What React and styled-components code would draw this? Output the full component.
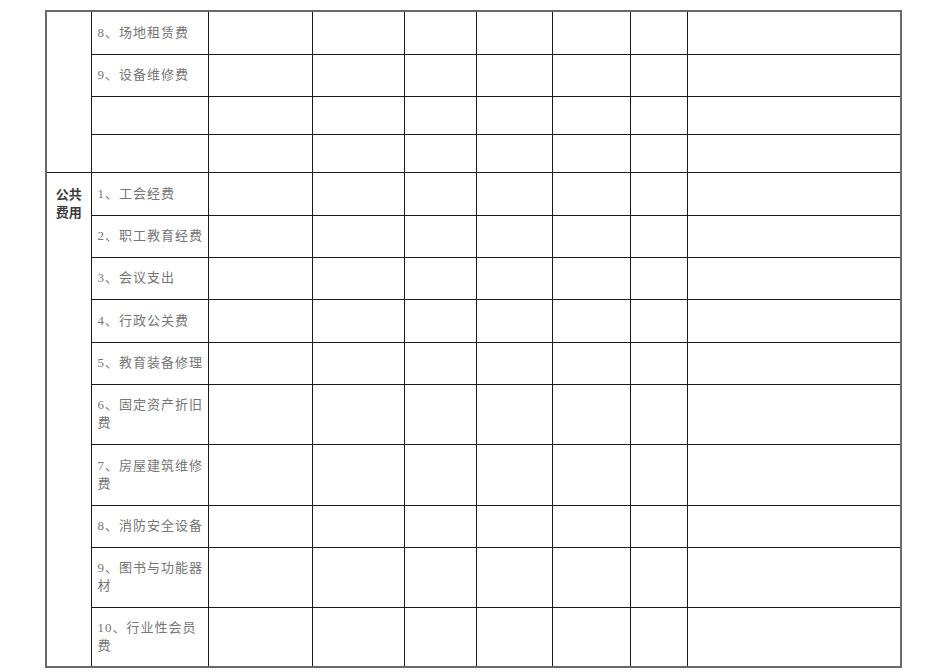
import React from 'react'
import styled, { createGlobalStyle } from 'styled-components'

const GlobalStyle = createGlobalStyle`
    html, body {
        margin: 0;
        padding: 0;
        background: #fff;
    }
    body {
        font-family: "Liberation Serif", "Noto Sans CJK SC", serif;
    }
`

const Page = styled.div`
    padding: 10px 0 0 45px;
    width: 950px;
    height: 672px;
    box-sizing: border-box;
    overflow: hidden;
`

const Sheet = styled.table`
    border-collapse: collapse;
    table-layout: fixed;
    width: 855px;
    border: 2px solid #6a6a6a;
`

const Cell = styled.td`
    border: 1px solid #1a1a1a;
    height: ${p => p.h}px;
    padding: 0;
    box-sizing: border-box;
`

const GroupCell = styled.td`
    border: 1px solid #1a1a1a;
    vertical-align: top;
    text-align: center;
    padding: 12px 0 0 0;
    font-family: "Noto Sans CJK SC", "Noto Sans", sans-serif;
    font-weight: 700;
    font-size: 13px;
    line-height: 18px;
    color: #3a3a3a;
`

const ItemCell = styled(Cell)`
    padding: 0 4px 0 6px;
    vertical-align: middle;
    font-family: "Liberation Serif", "Noto Sans CJK SC", serif;
    font-size: 13px;
    line-height: 18px;
    letter-spacing: 1px;
    color: #767676;
`

const Line = styled.div`
    white-space: nowrap;
`

const widths = [45, 117, 104, 92, 72, 76, 78, 57, 214]

const rows = [
    { h: 43, label: ['8、场地租赁费'] },
    { h: 42, label: ['9、设备维修费'] },
    { h: 38, label: [] },
    { h: 38, label: [] },
    { h: 43, label: ['1、工会经费'], group: '公共\n费用' },
    { h: 42, label: ['2、职工教育经费'] },
    { h: 42, label: ['3、会议支出'] },
    { h: 43, label: ['4、行政公关费'] },
    { h: 42, label: ['5、教育装备修理'] },
    { h: 60, label: ['6、固定资产折旧', '费'] },
    { h: 61, label: ['7、房屋建筑维修', '费'] },
    { h: 42, label: ['8、消防安全设备'] },
    { h: 60, label: ['9、图书与功能器', '材'] },
    { h: 60, label: ['10、行业性会员', '费'] },
]

const App = () => {
    return (
        <Page>
            <GlobalStyle />
            <Sheet>
                <colgroup>
                    {widths.map((w, i) => <col key={i} style={{ width: w }} />)}
                </colgroup>
                <tbody>
                    {rows.map((row, i) => (
                        <tr key={i}>
                            {i === 0 && <GroupCell rowSpan={4} />}
                            {row.group && (
                                <GroupCell rowSpan={10}>
                                    {row.group.split('\n').map((t, j) => <Line key={j}>{t}</Line>)}
                                </GroupCell>
                            )}
                            <ItemCell h={row.h}>
                                {row.label.map((t, j) => <Line key={j}>{t}</Line>)}
                            </ItemCell>
                            {widths.slice(2).map((w, j) => <Cell key={j} h={row.h} />)}
                        </tr>
                    ))}
                </tbody>
            </Sheet>
        </Page>
    )
}

export default App
